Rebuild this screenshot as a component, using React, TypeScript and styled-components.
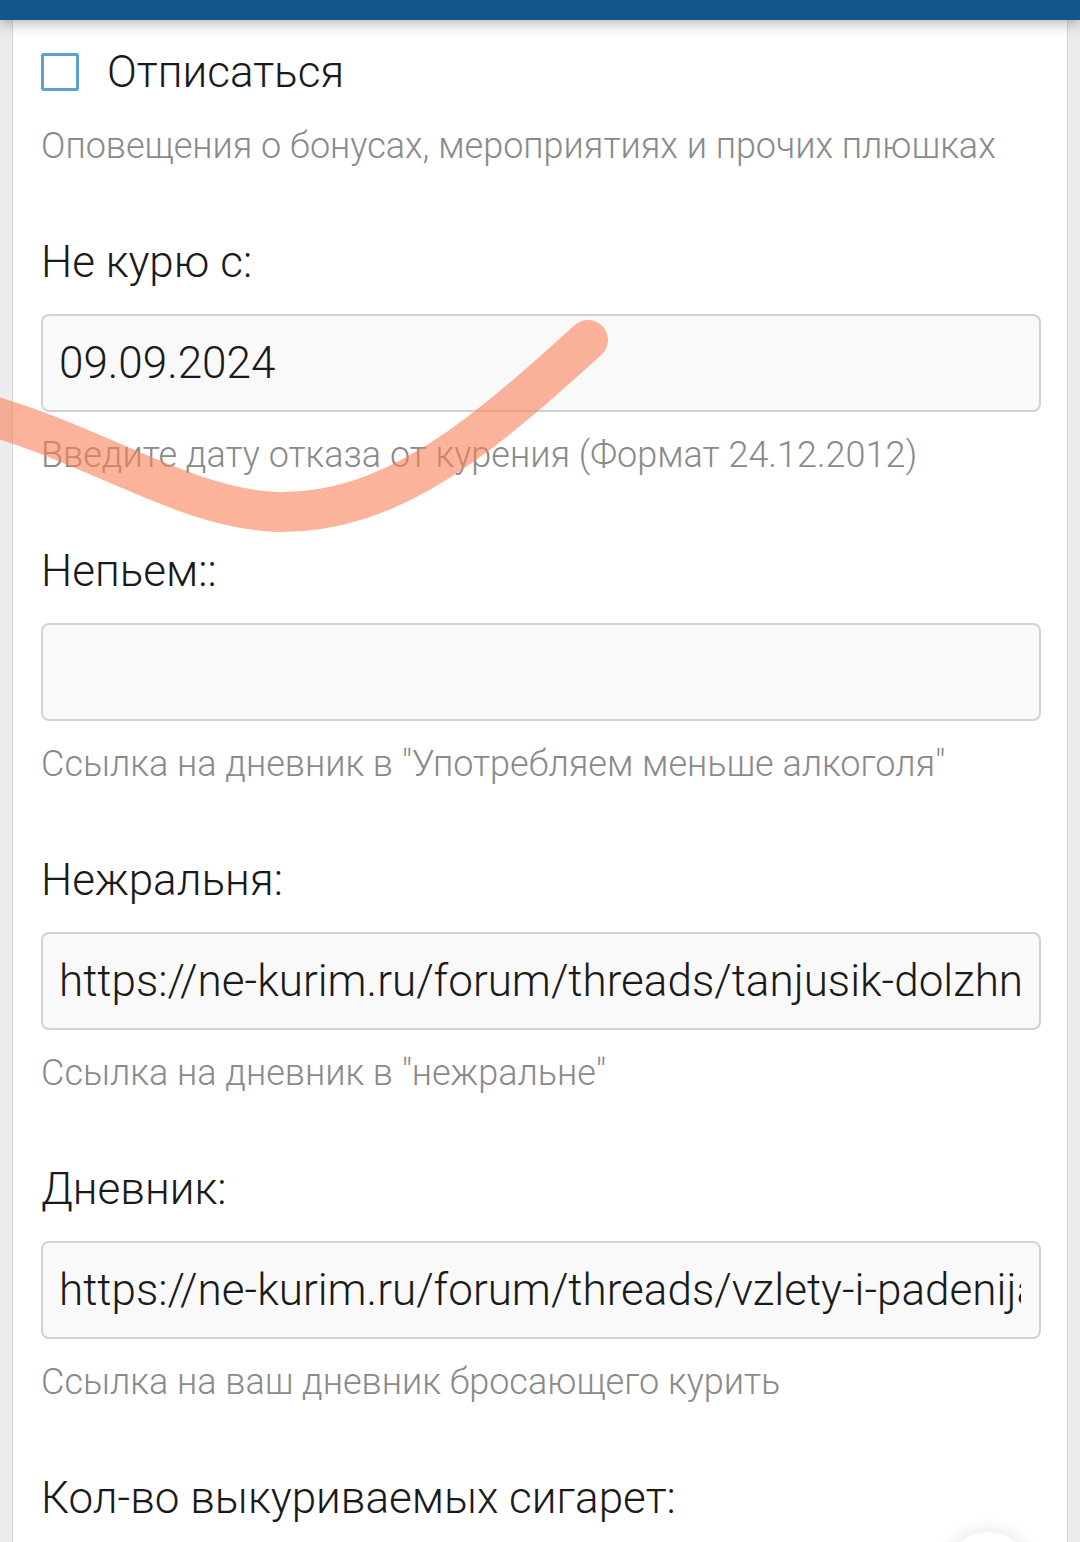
import React from 'react';
import styled, { createGlobalStyle } from 'styled-components';

type Field = {
  label: string;
  value: string;
  hint: string;
};

const fields: Field[] = [
  {
    label: 'Не курю с:',
    value: '09.09.2024',
    hint: 'Введите дату отказа от курения (Формат 24.12.2012)',
  },
  {
    label: 'Непьем::',
    value: '',
    hint: 'Ссылка на дневник в "Употребляем меньше алкоголя"',
  },
  {
    label: 'Нежральня:',
    value: 'https://ne-kurim.ru/forum/threads/tanjusik-dolzhna-pokhudet.1234/',
    hint: 'Ссылка на дневник в "нежральне"',
  },
  {
    label: 'Дневник:',
    value: 'https://ne-kurim.ru/forum/threads/vzlety-i-padenija.5678/',
    hint: 'Ссылка на ваш дневник бросающего курить',
  },
];

const App: React.FC = () => {
  return (
    <Page>
      <GlobalStyle />
      <TopBar />
      <Card>
        <CheckRow>
          <CheckBox />
          <CheckLabel>Отписаться</CheckLabel>
        </CheckRow>
        <Hint $first>Оповещения о бонусах, мероприятиях и прочих плюшках</Hint>

        {fields.map((f) => (
          <FieldGroup key={f.label}>
            <Label>{f.label}</Label>
            <Input value={f.value} readOnly />
            <Hint>{f.hint}</Hint>
          </FieldGroup>
        ))}

        <FieldGroup>
          <Label>Кол-во выкуриваемых сигарет:</Label>
        </FieldGroup>
      </Card>

      {/* marker stroke drawn over the screenshot */}
      <Scribble viewBox="0 0 640 560" width="640" height="560">
        <path
          d="M -30 410 C 90 440, 180 508, 277 512 C 390 514, 478 440, 588 340"
          fill="none"
          stroke="rgb(250,128,88)"
          strokeOpacity="0.6"
          strokeWidth="40"
          strokeLinecap="round"
        />
      </Scribble>
      <FloatButton />
    </Page>
  );
};

export default App;

const GlobalStyle = createGlobalStyle`
  html, body {
    margin: 0;
    padding: 0;
    background: #ececec;
    overflow: hidden;
  }
  body {
    font-family: Roboto, "Noto Sans", sans-serif;
  }
`;

const Page = styled.div`
  position: relative;
  width: 1080px;
  height: 1542px;
  overflow: hidden;
  background: #ececec;
  display: flex;
  flex-direction: column;
`;

const TopBar = styled.div`
  height: 20px;
  flex: none;
  background: #13578a;
  box-shadow: 0 4px 14px rgb(0 0 0 / 28%);
  position: relative;
  z-index: 2;
`;

const Card = styled.div`
  margin: 0 12px;
  flex: 1;
  background: #fff;
  border-left: 1px solid #d6d6d6;
  border-right: 1px solid #d6d6d6;
  padding: 26px 27px 0 28px;
`;

const CheckRow = styled.div`
  display: flex;
  align-items: center;
  gap: 28px;
  height: 52px;
`;

const CheckBox = styled.span`
  width: 32px;
  height: 32px;
  border: 3px solid #5ba3d6;
  border-radius: 3px;
  background: #fff;
  flex: none;
`;

const CheckLabel = styled.span`
  font-size: 44px;
  font-weight: 300;
  color: #1a1a1a;
  line-height: 52px;
`;

const Hint = styled.div<{ $first?: boolean }>`
  font-size: 36px;
  font-weight: 300;
  line-height: 44px;
  color: #8a8a8a;
  margin-top: ${({ $first }) => ($first ? '26px' : '21px')};
  white-space: nowrap;
`;

const FieldGroup = styled.div`
  margin-top: 68px;
  display: flex;
  flex-direction: column;
`;

const Label = styled.div`
  font-size: 44px;
  font-weight: 300;
  line-height: 52px;
  color: #1a1a1a;
  white-space: nowrap;
`;

const Input = styled.input`
  margin-top: 26px;
  box-sizing: border-box;
  width: 1000px;
  height: 98px;
  border: 2px solid #d2d2d2;
  border-radius: 8px;
  background: #f9f9f9;
  padding: 0 18px 0 16px;
  font-family: Roboto, "Noto Sans", sans-serif;
  font-size: 44px;
  font-weight: 300;
  color: #1a1a1a;
  outline: none;
`;

const Scribble = styled.svg`
  position: absolute;
  left: 0;
  top: 0;
  pointer-events: none;
`;

const FloatButton = styled.div`
  position: absolute;
  left: 942px;
  top: 1532px;
  width: 92px;
  height: 92px;
  border-radius: 50%;
  background: #fff;
  box-shadow: 0 -3px 16px rgb(0 0 0 / 9%);
`;
